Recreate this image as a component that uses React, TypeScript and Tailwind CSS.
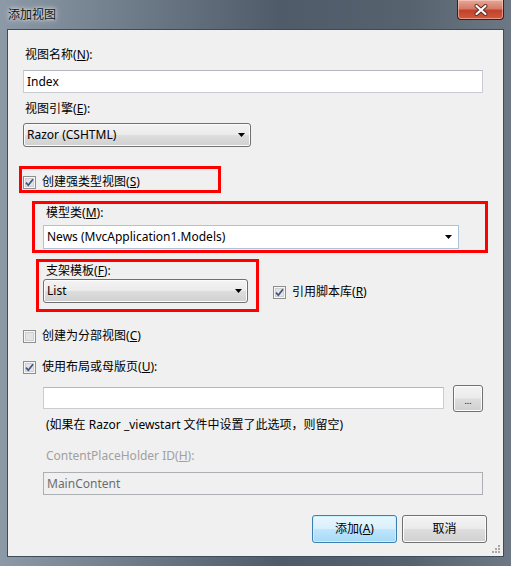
import React from "react";

const Check = ({ checked }: { checked?: boolean }) => (
  <svg width="13" height="13" viewBox="0 0 13 13" className="shrink-0">
    <rect x="0.5" y="0.5" width="12" height="12" fill="#f6f6f6" stroke="#8e8f8f" />
    <rect x="2.5" y="2.5" width="8" height="8" fill="#e4e4e4" stroke="#cfcfcf" />
    {checked && (
      <path
        d="M3 6.6 L5.3 9.2 L10 3.2"
        fill="none"
        stroke="#3b5484"
        strokeWidth="1.7"
      />
    )}
  </svg>
);

const Arrow = () => (
  <svg width="7" height="4" viewBox="0 0 7 4" className="shrink-0">
    <path d="M0 0 H7 L3.5 4 Z" fill="#000" />
  </svg>
);

const Label = ({
  text,
  hotkey,
  tail = ":",
  className = "",
}: {
  text: string;
  hotkey: string;
  tail?: string;
  className?: string;
}) => (
  <span className={"whitespace-nowrap leading-[16px] " + className}>
    {text}(<u>{hotkey}</u>){tail}
  </span>
);

const grayBtn =
  "rounded-[3px] border border-[#707070] bg-[linear-gradient(#f3f3f3_0%,#ebebeb_48%,#dddddd_52%,#d0d0d0_100%)] shadow-[inset_0_0_0_1px_#fcfcfc]";

export default function App() {
  return (
    <div className="relative w-[511px] h-[566px] overflow-hidden text-[12px] text-black font-['Noto_Sans','Noto_Sans_CJK_SC',sans-serif] bg-[linear-gradient(90deg,#8c99a6_0%,#6f7c89_25%,#4f5b68_55%,#56636f_80%,#6d7884_100%)]">
      {/* title bar */}
      <div className="flex h-[29px] items-start justify-between">
        <span className="pl-[8px] pt-[7px] leading-[16px] text-[#111] [text-shadow:0_0_6px_#e8edf2,0_0_3px_#e8edf2]">
          添加视图
        </span>
        <div className="mr-[7px] flex h-[20px] w-[47px] items-center justify-center rounded-b-[4px] border border-t-0 border-[#3d1f1a] bg-[linear-gradient(#e9a797_0%,#d47b69_45%,#c2422b_55%,#d05a3e_100%)] shadow-[inset_0_0_0_1px_rgba(255,220,210,0.5)]">
          <svg width="14" height="12" viewBox="0 0 14 12">
            <path d="M2.5 2 L11.5 10 M11.5 2 L2.5 10" stroke="#5a2a22" strokeWidth="4" strokeLinecap="round" />
            <path d="M2.5 2 L11.5 10 M11.5 2 L2.5 10" stroke="#fff" strokeWidth="2.2" strokeLinecap="round" />
          </svg>
        </div>
      </div>

      {/* client area */}
      <div className="relative ml-[7px] h-[528px] w-[497px] border border-[#3e4b58] bg-[#f0f0f0]">
        <div className="flex flex-col items-start pl-[15px]">
          <Label text="视图名称" hotkey="N" className="mt-[17px] ml-[2px]" />
          <div className="mt-[7px] flex h-[23px] w-[460px] items-center border border-[#c9ccd1] border-t-[#b4b8be] bg-white pl-[3px]">
            Index
          </div>

          <Label text="视图引擎" hotkey="E" className="mt-[8px] ml-[2px]" />
          <div className={"mt-[6px] flex h-[24px] w-[228px] items-center justify-between pl-[3px] pr-[5px] " + grayBtn}>
            <span>Razor (CSHTML)</span>
            <Arrow />
          </div>

          <div className="-ml-[4px] mt-[19px] h-[27px] w-[202px] border-[3px] border-[#ff0000] pl-[1px] pt-[5px]">
            <div className="flex items-center gap-[6px]">
              <Check checked />
              <Label text="创建强类型视图" hotkey="S" tail="" />
            </div>
          </div>

          <div className="ml-[9px] mt-[8px] flex w-[456px] flex-col items-start border-[3px] border-[#ff0000] pb-[1px] pl-[8px] pt-[1px]">
            <Label text="模型类" hotkey="M" className="ml-[3px]" />
            <div className="mt-[4px] flex h-[24px] w-[416px] items-center justify-between border border-[#a9c4dc] bg-white pl-[3px] pr-[6px]">
              <span>News (MvcApplication1.Models)</span>
              <Arrow />
            </div>
          </div>

          <div className="mt-[6px] flex items-start">
            <div className="ml-[13px] flex w-[223px] flex-col items-start border-[3px] border-[#ff0000] pb-[6px] pl-[4px] pt-[1px]">
              <Label text="支架模板" hotkey="F" className="ml-[3px]" />
              <div className={"flex h-[24px] w-[205px] items-center justify-between pl-[3px] pr-[5px] " + grayBtn}>
                <span>List</span>
                <Arrow />
              </div>
            </div>
            <div className="ml-[14px] mt-[25px] flex items-center gap-[6px]">
              <Check checked />
              <Label text="引用脚本库" hotkey="R" tail="" />
            </div>
          </div>

          <div className="mt-[16px] flex items-center gap-[6px]">
            <Check />
            <Label text="创建为分部视图" hotkey="C" tail="" />
          </div>

          <div className="mt-[15px] flex items-center gap-[6px]">
            <Check checked />
            <Label text="使用布局或母版页" hotkey="U" />
          </div>

          <div className="ml-[20px] mt-[10px] flex items-start gap-[9px]">
            <div className="mt-[2px] h-[22px] w-[401px] border border-[#c9ccd1] border-t-[#b4b8be] bg-white" />
            <div className={"flex h-[27px] w-[30px] items-end justify-center pb-[5px] text-[9px] leading-[10px] " + grayBtn}>
              ...
            </div>
          </div>

          <span className="ml-[23px] mt-[5px] whitespace-nowrap leading-[16px]">
            (如果在 Razor _viewstart 文件中设置了此选项，则留空)
          </span>

          <Label
            text="ContentPlaceHolder ID"
            hotkey="H"
            className="ml-[23px] mt-[15px] text-[#a0a0a0]"
          />
          <div className="ml-[20px] mt-[8px] flex h-[23px] w-[440px] items-center border border-[#acb0b4] bg-[#f0f0f0] pl-[3px] text-[#6d6d6d]">
            MainContent
          </div>

          <div className="ml-[289px] mt-[20px] flex gap-[5px]">
            <div className="flex h-[28px] w-[85px] items-center justify-center rounded-[3px] border border-[#3c7fb1] bg-[linear-gradient(#eaf6fd_0%,#d9f0fc_48%,#bee6fd_52%,#a7d9f5_100%)] shadow-[inset_0_0_0_1px_#c8f0ff]">
              添加(<u>A</u>)
            </div>
            <div className={"flex h-[28px] w-[85px] items-center justify-center " + grayBtn}>
              取消
            </div>
          </div>
        </div>

        {/* resize grip */}
        <svg width="10" height="10" viewBox="0 0 10 10" className="absolute bottom-[2px] right-[2px]">
          {[
            [7, 1],
            [4, 4],
            [7, 4],
            [1, 7],
            [4, 7],
            [7, 7],
          ].map(([x, y], i) => (
            <rect key={i} x={x} y={y} width="2" height="2" fill="#a8a8a8" />
          ))}
        </svg>
      </div>
    </div>
  );
}
